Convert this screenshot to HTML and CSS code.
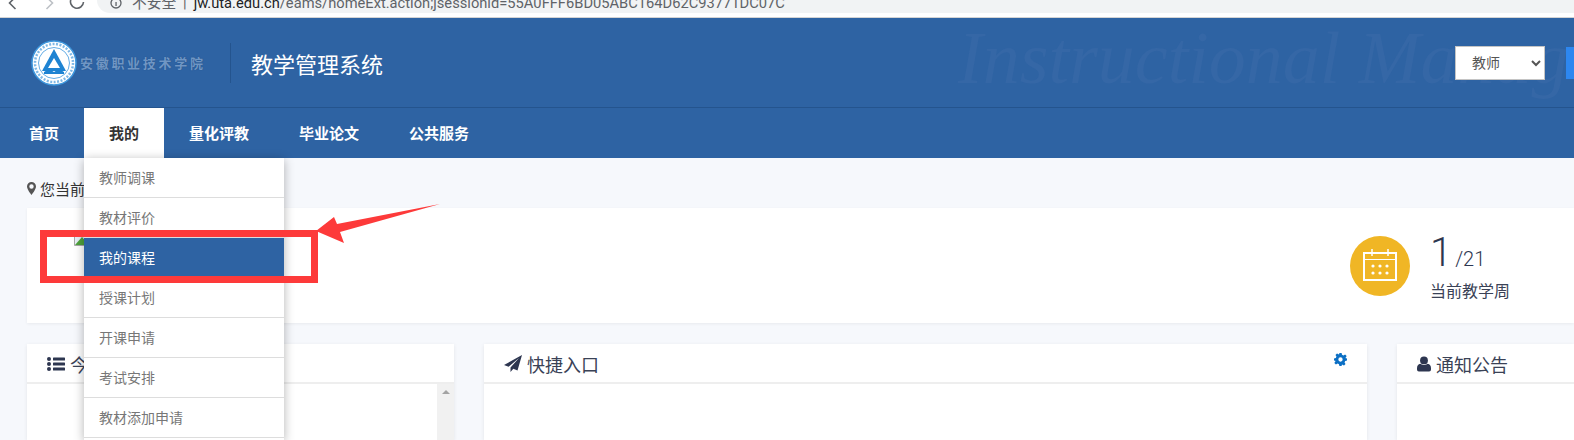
FILE: index.html
```html
<!DOCTYPE html>
<html lang="zh-CN">
<head>
    <meta charset="UTF-8">
    <title>教学管理系统</title>
    <link rel="stylesheet" href="styles.css">
</head>
<body>

    <!-- browser chrome, cut off at the top of the shot -->
    <div class="chrome">
        <svg class="chrome-icons" width="90" height="18" viewBox="0 0 90 18">
            <path d="M12 -3 L6 3 L12 9" fill="none" stroke="#5f6368" stroke-width="1.6"/>
            <path d="M43 -3 L49 3 L43 9" fill="none" stroke="#bdc1c6" stroke-width="1.6"/>
            <path d="M81 2 A6.5 6.5 0 1 1 79 -3" fill="none" stroke="#5f6368" stroke-width="1.6" transform="translate(-1 0)"/>
        </svg>
        <div class="omnibox">
            <svg width="12" height="12" viewBox="0 0 12 12" class="omni-info">
                <circle cx="6" cy="6" r="5" fill="none" stroke="#5f6368" stroke-width="1.3"/>
                <rect x="5.4" y="5" width="1.3" height="4" fill="#5f6368"/>
            </svg>
            <span class="omni-warn">不安全</span>
            <span class="omni-sep">|</span>
            <span class="omni-url">jw.uta.edu.cn<span class="omni-path">/eams/homeExt.action;jsessionid=55A0FFF6BD05ABC164D62C93771DC07C</span></span>
        </div>
    </div>

    <header class="header">
        <div class="watermark">Instructional Manager</div>
        <svg class="logo" width="46" height="46" viewBox="0 0 46 46">
            <circle cx="23" cy="23" r="22" fill="#fff" stroke="#3f98de" stroke-width="1.5"/>
            <circle cx="23" cy="23" r="15.5" fill="none" stroke="#3f98de" stroke-width="0.8"/>
            <circle cx="23" cy="23" r="19" fill="none" stroke="#7fb8e6" stroke-width="2.5" stroke-dasharray="2 1.5"/>
            <path d="M23 9 L35 31 H11 Z" fill="#1e83d2"/>
            <path d="M23 18 L29 28 H17 Z" fill="#fff"/>
            <path d="M13 32 Q18 28 23 32 Q28 28 33 32 V34 H13 Z" fill="#1e83d2"/>
        </svg>
        <span class="school">安徽职业技术学院</span>
        <span class="divider"></span>
        <h1 class="title">教学管理系统</h1>
        <div class="header-tools">
            <select class="role">
                <option>教师</option>
            </select>
            <span class="blue-btn"></span>
        </div>
    </header>

    <nav class="nav">
        <a class="nav-item">首页</a>
        <div class="nav-drop">
            <a class="nav-item active">我的</a>
            <ul class="menu">
                <li>教师调课</li>
                <li>教材评价</li>
                <li class="current">我的课程</li>
                <li>授课计划</li>
                <li>开课申请</li>
                <li>考试安排</li>
                <li>教材添加申请</li>
                <li class="menu-rest"></li>
            </ul>
        </div>
        <a class="nav-item">量化评教</a>
        <a class="nav-item">毕业论文</a>
        <a class="nav-item">公共服务</a>
    </nav>

    <main class="content">
        <div class="crumb">
            <svg width="9" height="13" viewBox="0 0 9 13">
                <path d="M4.5 0 A4.5 4.5 0 0 0 0 4.5 C0 7.5 4.5 13 4.5 13 S9 7.5 9 4.5 A4.5 4.5 0 0 0 4.5 0 Z M4.5 2.3 A2.2 2.2 0 1 1 4.5 6.7 A2.2 2.2 0 1 1 4.5 2.3 Z" fill="#555" fill-rule="evenodd"/>
            </svg>
            <span>您当前位置</span>
        </div>

        <section class="summary">
            <svg class="broken" width="16" height="16" viewBox="0 0 16 16">
                <path d="M0.5 0.5 H10 L15.5 6 V15.5 H0.5 Z" fill="#e8eef6" stroke="#a9a9a9"/>
                <path d="M1 15 L8 7 L15 15 Z" fill="#4fa33c"/>
            </svg>
            <div class="stat">
                <span class="stat-icon">
                    <svg width="36" height="36" viewBox="0 0 36 36" fill="none" stroke="#fff" stroke-width="2">
                        <rect x="2" y="5" width="32" height="27"/>
                        <path d="M2 11.5 H34" stroke-width="1"/>
                        <path d="M10 1 V8 M26 1 V8" stroke-width="1.5"/>
                        <g fill="#fff" stroke="none">
                            <circle cx="11" cy="18" r="1.6"/><circle cx="18" cy="18" r="1.6"/><circle cx="25" cy="18" r="1.6"/>
                            <circle cx="11" cy="25" r="1.6"/><circle cx="18" cy="25" r="1.6"/><circle cx="25" cy="25" r="1.6"/>
                        </g>
                    </svg>
                </span>
                <div>
                    <div class="stat-num">1<small>/21</small></div>
                    <div class="stat-label">当前教学周</div>
                </div>
            </div>
        </section>

        <div class="panels">
            <section class="panel">
                <div class="panel-head">
                    <svg width="18" height="14" viewBox="0 0 18 14" fill="#2d3650">
                        <circle cx="2" cy="2" r="2"/><circle cx="2" cy="7" r="2"/><circle cx="2" cy="12" r="2"/>
                        <rect x="6" y="0.5" width="12" height="3" rx="0.6"/><rect x="6" y="5.5" width="12" height="3" rx="0.6"/><rect x="6" y="10.5" width="12" height="3" rx="0.6"/>
                    </svg>
                    <span>今日课表</span>
                </div>
                <div class="panel-body">
                    <div class="scrollbar"><span class="scroll-up"></span></div>
                </div>
            </section>
            <section class="panel">
                <div class="panel-head">
                    <svg width="18" height="17" viewBox="0 0 18 17" fill="#2d3650">
                        <path d="M18 0 L0 10 L4.6 11.8 L15 3 L6.5 12.6 L6.5 17 L9.3 13.8 L13.5 15.5 Z"/>
                    </svg>
                    <span>快捷入口</span>
                    <svg class="gear" width="13" height="13" viewBox="0 0 24 24">
                        <path d="M10 0 H14 L14.8 3.4 L17.4 4.5 L20.5 2.7 L23.3 5.5 L21.5 8.6 L20.6 9.2 L24 10 V14 L20.6 14.8 L19.5 17.4 L21.3 20.5 L18.5 23.3 L15.4 21.5 L14.8 20.6 L14 24 H10 L9.2 20.6 L6.6 19.5 L3.5 21.3 L0.7 18.5 L2.5 15.4 L3.4 14.8 L0 14 V10 L3.4 9.2 L4.5 6.6 L2.7 3.5 L5.5 0.7 L8.6 2.5 L9.2 3.4 Z M12 8 A4 4 0 1 0 12 16 A4 4 0 1 0 12 8 Z" fill="#0b6fc4" fill-rule="evenodd"/>
                    </svg>
                </div>
                <div class="panel-body"></div>
            </section>
            <section class="panel">
                <div class="panel-head">
                    <svg width="14" height="16" viewBox="0 0 15 16" fill="#2d3650">
                        <circle cx="7.5" cy="4.2" r="4.2"/>
                        <path d="M3.6 7.6 Q7.5 10.6 11.4 7.6 Q15 8.4 15 12.5 V14 Q15 16 13 16 H2 Q0 16 0 14 V12.5 Q0 8.4 3.6 7.6 Z"/>
                    </svg>
                    <span>通知公告</span>
                </div>
                <div class="panel-body"></div>
            </section>
        </div>
    </main>

    <!-- red marks someone drew on the screenshot -->
    <div class="mark-box"></div>
    <svg class="mark-arrow" width="130" height="45" viewBox="0 0 130 45">
        <polygon points="0,27 18,13 21,20 124,0 24,28 28,39" fill="#fd3a3a"/>
    </svg>

</body>
</html>
```

FILE: styles.css
```css
* {
    box-sizing: border-box;
}
html, body {
    margin: 0;
    height: 440px;
    overflow: hidden;
}
body {
    position: relative;
    font-family: "Liberation Sans", "Noto Sans CJK SC", sans-serif;
    background: #f6f8fc;
    color: #333;
}

/* browser bar */
.chrome {
    height: 18px;
    display: flex;
    background: #fff;
    border-bottom: 1px solid #d4d4d4;
    overflow: hidden;
}
.chrome-icons {
    flex: none;
    width: 97px;
}
.omnibox {
    flex: 1;
    height: 13px;
    display: flex;
    align-items: flex-end;
    gap: 7px;
    padding-left: 13px;
    background: #f1f3f4;
    border-bottom-left-radius: 13px;
    font-family: Roboto, "Noto Sans CJK SC", sans-serif;
    font-size: 14.7px;
    line-height: 18px;
    white-space: nowrap;
}
.omni-info {
    flex: none;
    margin-bottom: 4px;
}
.omni-warn,
.omni-sep {
    color: #5f6368;
    margin-bottom: 1px;
}
.omni-warn {
    margin-left: 3px;
}
.omni-url {
    color: #202124;
    margin-bottom: 1px;
}
.omni-path {
    color: #5f6368;
}

/* blue header */
.header {
    position: relative;
    height: 90px;
    display: flex;
    align-items: center;
    padding-left: 31px;
    background: #2e63a3;
    border-bottom: 1px solid #24548e;
    overflow: hidden;
}
.watermark {
    position: absolute;
    left: 958px;
    top: -2px;
    font-family: "Liberation Serif", serif;
    font-style: italic;
    font-size: 74px;
    white-space: nowrap;
    color: #3567a6;
}
.logo {
    flex: none;
    position: relative;
    margin-right: 3px;
}
.school {
    position: relative;
    width: 126px;
    font-size: 13px;
    font-weight: bold;
    letter-spacing: 2.7px;
    white-space: nowrap;
    color: #7096c4;
    text-shadow: 0 0 1px #1d4a80;
}
.divider {
    width: 1px;
    height: 40px;
    margin: 0 20px 0 24px;
    background: #24548e;
}
.title {
    position: relative;
    margin: 0;
    font-size: 22px;
    font-weight: normal;
    color: #fff;
}
.header-tools {
    position: relative;
    margin-left: auto;
    display: flex;
    align-items: center;
    gap: 21px;
    margin-right: -58px;
}
.role {
    width: 90px;
    height: 34px;
    padding-left: 12px;
    background: #fff;
    border: 1px solid #c4c4c4;
    color: #555;
    font-family: inherit;
    font-size: 14px;
}
.blue-btn {
    width: 66px;
    height: 32px;
    background: #2d87f0;
}

/* nav row */
.nav {
    height: 50px;
    display: flex;
    padding-left: 4px;
    background: #2e63a3;
}
.nav-item {
    display: block;
    height: 50px;
    padding: 0 25px;
    font-size: 15px;
    font-weight: bold;
    line-height: 52px;
    color: #fff;
}
.nav-item.active {
    background: #fff;
    color: #333;
}
.nav-drop {
    position: relative;
}
.menu {
    position: absolute;
    left: 0;
    top: 50px;
    z-index: 5;
    width: 200px;
    margin: 0;
    padding: 0;
    list-style: none;
    background: #fff;
    box-shadow: 0 2px 10px rgba(0, 0, 0, 0.3);
}
.menu li {
    height: 40px;
    padding-left: 15px;
    border-bottom: 1px solid #ddd;
    font-size: 14px;
    line-height: 40px;
    color: #777;
}
.menu li.current {
    background: #2e63a3;
    color: #fff;
}
.menu li.menu-rest {
    height: 2px;
    border-bottom: 0;
}

/* page body */
.content {
    padding-left: 27px;
}
.crumb {
    height: 50px;
    display: flex;
    align-items: center;
    gap: 4px;
    padding-top: 11px;
    font-size: 15px;
    color: #333;
}
.summary {
    position: relative;
    height: 115px;
    display: flex;
    justify-content: flex-end;
    align-items: center;
    padding-right: 64px;
    background: #fff;
    box-shadow: 0 1px 3px rgba(0, 0, 0, 0.06);
}
.broken {
    position: absolute;
    left: 47px;
    top: 22px;
}
.stat {
    display: flex;
    align-items: center;
    gap: 20px;
}
.stat-icon {
    width: 60px;
    height: 60px;
    display: flex;
    align-items: center;
    justify-content: center;
    border-radius: 50%;
    background: #f0b625;
}
.stat-num {
    padding-top: 2px;
    font-family: Roboto, sans-serif;
    font-size: 40px;
    font-weight: 300;
    line-height: 44px;
    color: #2d3650;
}
.stat-num small {
    margin-left: 3px;
    font-size: 20px;
}
.stat-label {
    font-size: 16px;
    line-height: 22px;
    color: #3a4256;
}
.panels {
    display: grid;
    grid-template-columns: 427px 883px 1fr;
    gap: 30px;
    margin-top: 21px;
}
.panel {
    background: #fff;
    box-shadow: 0 1px 4px rgba(0, 0, 0, 0.08);
}
.panel-head {
    height: 40px;
    display: flex;
    align-items: center;
    gap: 5px;
    padding: 1px 0 0 20px;
    border-bottom: 2px solid #eeeeee;
    font-size: 18px;
    color: #3a4256;
}
.gear {
    margin-left: auto;
    margin-right: 20px;
    margin-top: -8px;
}
.panel-body {
    height: 56px;
    display: flex;
    justify-content: flex-end;
}
.scrollbar {
    width: 17px;
    padding-top: 6px;
    background: #f1f1f1;
}
.scroll-up {
    display: block;
    width: 0;
    margin: 0 auto;
    border-left: 4px solid transparent;
    border-right: 4px solid transparent;
    border-bottom: 4px solid #a3a3a3;
}

/* annotation */
.mark-box {
    position: absolute;
    left: 40px;
    top: 230px;
    z-index: 10;
    width: 278px;
    height: 53px;
    border: 7px solid #fd3a3a;
}
.mark-arrow {
    position: absolute;
    left: 316px;
    top: 204px;
    z-index: 10;
}
```
